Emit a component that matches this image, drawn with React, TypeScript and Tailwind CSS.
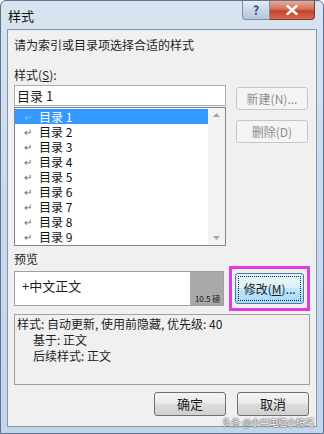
import React from "react";

const font = { fontFamily: '"Noto Sans CJK SC", "Noto Sans", sans-serif' };

const items = ["目录 1", "目录 2", "目录 3", "目录 4", "目录 5", "目录 6", "目录 7", "目录 8", "目录 9"];

const SideButton = ({ label, disabled }: { label: React.ReactNode; disabled?: boolean }) => (
  <div
    className={
      disabled
        ? "h-[23px] w-[72px] rounded-[3px] border border-[#c3c6c9] bg-[#f4f4f4] flex items-center justify-center text-[12px] text-[#8d8d8d]"
        : "h-[24px] w-[72px] rounded-[3px] border border-[#707070] bg-[linear-gradient(#f3f3f3,#ebebeb_45%,#dddddd_50%,#cfcfcf)] flex items-center justify-center text-[13px] text-[#1a1a1a]"
    }
  >
    {label}
  </div>
);

export default function App() {
  return (
    <div
      className="w-[324px] h-[434px] overflow-hidden rounded-t-[6px] border border-[#5d7290] bg-[linear-gradient(180deg,#d9e4f0_0%,#cbdbec_40%,#c3d5ea_100%)] text-[#1e1e1e]"
      style={font}
    >
      {/* title bar */}
      <div className="flex h-[28px] items-start">
        <div className="pl-[7px] pt-[5px] text-[13px] text-[#111]">样式</div>
        <div className="ml-auto mr-[8px] flex">
          <div className="flex h-[19px] w-[28px] items-center justify-center rounded-bl-[4px] border border-t-0 border-[#7b8ea7] bg-[linear-gradient(#e6edf5,#c9d6e5_50%,#b6c7dc)] text-[12px] font-bold text-[#3b4b60]">
            ?
          </div>
          <div className="flex h-[19px] w-[45px] items-center justify-center rounded-br-[4px] border border-l-0 border-t-0 border-[#7b3b31] bg-[linear-gradient(#e9a99b,#d4705b_45%,#c4422b_55%,#d66b52)]">
            <svg width="12" height="10" viewBox="0 0 12 10">
              <path d="M1.5 1 L10.5 9 M10.5 1 L1.5 9" stroke="#ffffff" strokeWidth="2.4" strokeLinecap="square" />
            </svg>
          </div>
        </div>
      </div>

      {/* client area */}
      <div className="mx-[6px] h-[398px] border border-[#8597b0] bg-[#f0f0f0] px-[6px] text-[12px] leading-[14px]">
        <div className="mt-[8px]">请为索引或目录项选择合适的样式</div>
        <div className="mt-[16px]">
          样式(<span className="underline">S</span>):
        </div>

        <div className="mt-[3px] flex gap-[10px]">
          <div className="w-[212px]">
            <div className="flex h-[21px] items-center border border-[#abadb3] bg-white pl-[2px] text-[13px]">目录 1</div>
            <div className="mt-[1px] flex h-[139px] border border-[#828790] bg-white">
              <div className="flex-1 pt-[1px]">
                {items.map((it, i) => (
                  <div
                    key={it}
                    className={
                      i === 0
                        ? "flex h-[15px] items-center bg-[#3399ff] text-[12px] leading-[15px] text-white"
                        : "flex h-[15px] items-center text-[12px] leading-[15px] text-[#111]"
                    }
                  >
                    <span className={i === 0 ? "w-[24px] pl-[9px] text-[10px] leading-[15px] text-[#8cc1f5]" : "w-[24px] pl-[9px] text-[10px] leading-[15px] text-[#666]"}>↵</span>
                    <span className="leading-[15px]">{it}</span>
                  </div>
                ))}
              </div>
              <div className="flex w-[17px] flex-col items-center justify-between bg-[#f3f3f3] py-[5px]">
                <svg width="7" height="4" viewBox="0 0 7 4">
                  <path d="M0 4 L3.5 0 L7 4 Z" fill="#a6a6a6" />
                </svg>
                <svg width="7" height="4" viewBox="0 0 7 4">
                  <path d="M0 0 L3.5 4 L7 0 Z" fill="#a6a6a6" />
                </svg>
              </div>
            </div>
          </div>
          <div className="flex flex-col gap-[10px] pt-[2px]">
            <SideButton label="新建(N)..." disabled />
            <SideButton label="删除(D)" disabled />
          </div>
        </div>

        <div className="mt-[6px]">预览</div>

        <div className="flex items-center gap-[5px]">
          <div className="flex h-[35px] w-[211px] border border-[#a0a0a0] bg-white">
            <div className="flex-1 pl-[7px] pt-[7px] text-[13px]">+中文正文</div>
            <div className="flex w-[33px] items-end justify-end bg-[#a9a9a9] pb-[1px] pr-[3px] text-[8px] leading-[10px] text-[#111]">
              10.5 磅
            </div>
          </div>
          <div className="flex h-[45px] w-[81px] items-center justify-center border-[3px] border-[#e23be3]">
            <div className="flex h-[31px] w-[69px] items-center justify-center rounded-[3px] border border-[#3c7fb1] bg-[linear-gradient(#eaf6fd,#d9f0fc_50%,#bee6fd_50%,#a7d9f5)] p-[2px]">
              <div className="flex h-full w-full items-center justify-center border border-dotted border-[#222] text-[12px]">
                修改(<span className="underline">M</span>)...
              </div>
            </div>
          </div>
        </div>

        <div className="mt-[3px] h-[71px] border border-[#a0a0a0] bg-[#f0f0f0] px-[2px] pt-[1px] leading-[16px]">
          <div>样式: 自动更新, 使用前隐藏, 优先级: 40</div>
          <div className="pl-[16px]">基于: 正文</div>
          <div className="pl-[16px]">后续样式: 正文</div>
        </div>

        <div className="mt-[7px] flex justify-end gap-[11px] pr-[1px]">
          <SideButton label="确定" />
          <SideButton label="取消" />
        </div>
        <div className="-mr-[6px] mt-[1px] flex justify-end">
          <span className="px-[2px] text-[9px] leading-[11px] text-white [text-shadow:0_0_2px_#333,0_0_1px_#333]">
            头条 @小兴电脑小技巧
          </span>
        </div>
      </div>
    </div>
  );
}
